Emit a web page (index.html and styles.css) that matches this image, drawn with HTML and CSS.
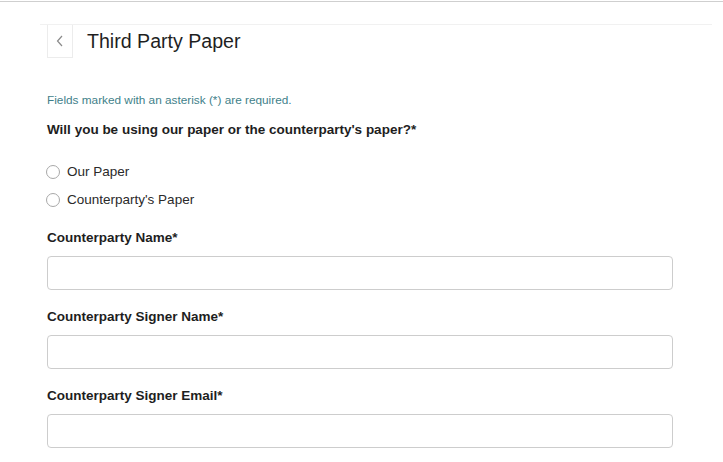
FILE: index.html
```
<!DOCTYPE html>
<html>
<head>
<meta charset="utf-8">
<link rel="stylesheet" href="styles.css">
</head>
<body>
<div class="topline"></div>
<div class="page">
  <header class="header">
    <button class="back" aria-label="Back">
      <svg width="8" height="12" viewBox="0 0 8 12"><path d="M6 1 L1.5 6 L6 11" fill="none" stroke="#8a8a8a" stroke-width="1.2"/></svg>
    </button>
    <h1 class="title">Third Party Paper</h1>
  </header>
  <form class="form">
    <p class="note">Fields marked with an asterisk (*) are required.</p>
    <p class="question">Will you be using our paper or the counterparty's paper?*</p>
    <div class="radios">
      <label class="radio"><span class="circle"></span>Our Paper</label>
      <label class="radio"><span class="circle"></span>Counterparty's Paper</label>
    </div>
    <div class="field">
      <label class="label">Counterparty Name*</label>
      <div class="input"></div>
    </div>
    <div class="field">
      <label class="label">Counterparty Signer Name*</label>
      <div class="input"></div>
    </div>
    <div class="field">
      <label class="label">Counterparty Signer Email*</label>
      <div class="input"></div>
    </div>
  </form>
</div>
</body>
</html>
```
FILE: styles.css
```
html, body { margin: 0; padding: 0; background: #fff; }
body { font-family: "Liberation Sans", Arial, sans-serif; color: #222; width: 723px; height: 462px; overflow: hidden; }
.topline { height: 1px; background: #cfcfcf; margin-top: 1px; }
.page { padding: 0 50px 0 47px; }
.header {
  display: flex; align-items: center; gap: 14px;
  margin: 22px 0 0 -7px; padding-left: 7px;
  border-top: 1px solid #f1f1f1; height: 33px; width: 665px;
}
.back {
  width: 26px; height: 33px; margin: 0; padding: 0;
  border: 1px solid #ececec; border-top: none; background: #fff;
  display: flex; align-items: center; justify-content: center;
}
.title { margin: 0; font-size: 19.6px; font-weight: normal; color: #1f1f1f; }
.form { display: flex; flex-direction: column; width: 626px; }
.note { margin: 35px 0 0; font-size: 11.8px; color: #3f7f8a; line-height: 14px; }
.question { margin: 15px 0 0; font-size: 13.5px; font-weight: bold; color: #1e1e1e; line-height: 16px; }
.radios { display: flex; flex-direction: column; gap: 12px; margin-top: 26px; }
.radio { display: flex; align-items: center; gap: 7px; font-size: 13.5px; color: #2a2a2a; line-height: 16px; margin-left: -1px; }
.circle { width: 12px; height: 12px; border: 1px solid #a8a8a8; border-radius: 50%; background: #fff; }
.field { display: flex; flex-direction: column; margin-top: 22px; }
.field + .field { margin-top: 19px; }
.label { font-size: 13.5px; font-weight: bold; color: #1e1e1e; line-height: 16px; }
.input { margin-top: 10px; height: 32px; border: 1px solid #cdcdcd; border-radius: 4px; background: #fff; }
```
